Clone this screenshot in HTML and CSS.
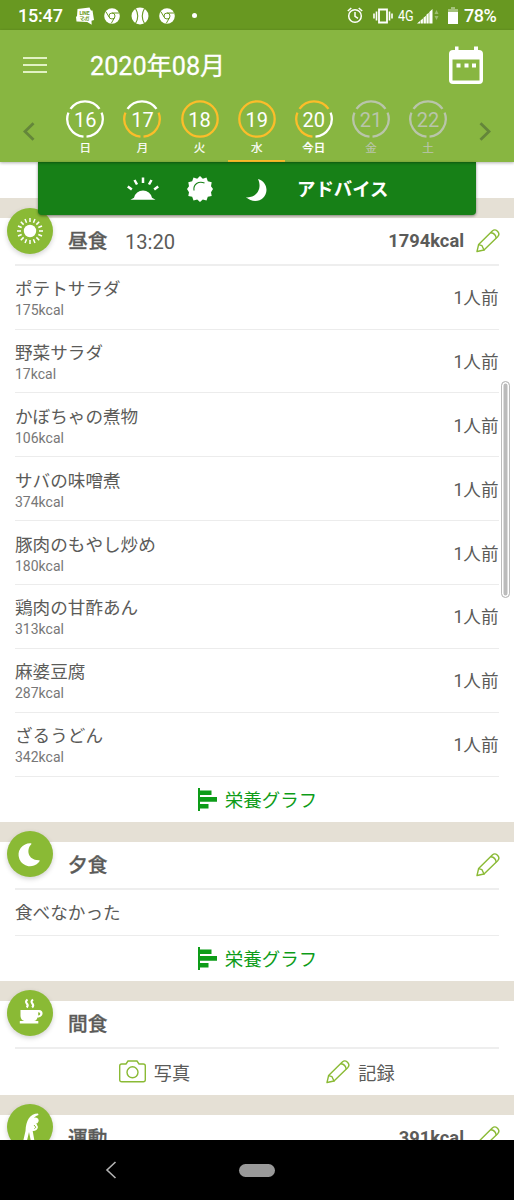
FILE: index.html
```html
<!DOCTYPE html>
<html lang="ja">
<head>
<meta charset="utf-8">
<title>食事記録</title>
<link rel="stylesheet" href="styles.css">
</head>
<body>
<svg class="defs" width="0" height="0">
  <symbol id="pencil" viewBox="0 0 24 24">
    <g fill="none" stroke="#8aba35" stroke-width="1.4" stroke-linejoin="round" stroke-linecap="round">
      <path d="M1 22.5 2.6 15.6 16.3 2a3.600 3.600 0 0 1 4.900 0l.7.7a3.600 3.600 0 0 1 0 4.700L8 21Z"/>
      <path d="M2.600 15.600l3.400 1.100L8 21M15 3.700c2.800.4 4.700 2.200 5.100 5"/>
    </g>
  </symbol>
  <symbol id="graph" viewBox="0 0 20 23">
    <path fill="#0d9c18" d="M0 0h2v2.500h11.500V7H2v2h17v4.700H2V16h8.500v4.500H2V23H0z"/>
  </symbol>
  <symbol id="chrome" viewBox="0 0 16 16">
    <circle cx="8" cy="8" r="7.8" fill="#fff"/>
    <g fill="none" stroke="#689821" stroke-width="1"><circle cx="8" cy="8" r="3"/><path d="M8 5h7M5.400 9.500 1.900 3.700M10.600 9.500 7.300 15.300"/></g>
  </symbol>
</svg>
<div class="phone">
  <div class="status">
    <span class="clock">15:47</span>
    <svg class="s-line" width="18" height="18" viewBox="0 0 18 18"><path fill="#fff" d="M1.500 2 13.500.5 15 3.500h1.500L18 13l-2.500.8.2 3.900-4.500-2.700L.5 14.500 0 10l1-1z"/><g fill="#689821" font-family="Roboto, sans-serif" font-size="5" font-weight="700"><text x="3.500" y="7.500" textLength="10">LINE</text><text x="3.500" y="12.500" textLength="10" font-family="Noto Sans CJK JP, sans-serif" font-size="4.500">マンガ</text></g></svg>
    <svg class="s-c1" width="16" height="16"><use href="#chrome"/></svg>
    <svg class="s-ball" width="18" height="18" viewBox="0 0 18 18"><circle cx="9" cy="9" r="8.500" fill="#fff"/><path d="M4.500 1.500q4.500 7.500 0 15M13.500 1.500q-4.500 7.500 0 15" fill="none" stroke="#689821" stroke-width="1.100"/></svg>
    <svg class="s-c2" width="16" height="16"><use href="#chrome"/></svg>
    <span class="dot"></span>
    <svg class="s-alarm" width="16" height="17" viewBox="0 0 16 17"><g fill="none" stroke="#fff" stroke-width="1.500"><circle cx="8" cy="9" r="6.300"/><path d="M8 5v4.300l3 2M.8 4 4.300 1M15.200 4 11.700 1"/></g></svg>
    <svg class="s-vib" width="20" height="16" viewBox="0 0 20 16"><path d="M6 1.500h8v13H6z" fill="none" stroke="#fff" stroke-width="1.800"/><path d="M3.500 3.500v9M1 5.500v5M16.500 3.500v9M19 5.500v5" stroke="#fff" stroke-width="1.600"/></svg>
    <span class="net">4G</span>
    <svg class="s-sig" width="22" height="16" viewBox="0 0 22 16"><path fill="#fff" d="M0 15.500 3 13v2.500zM3.500 12.500l2.400-2v5H3.500zM6.500 9.800l2.400-2v7.700H6.500zM9.400 6.800l2.300-2v10.700H9.400zM12.300 4 15.500 1v14.500h-3.200z"/><path fill="#9dbd70" d="m17.500 6 2-4 2 4zM17.500 8h4l-2 4z"/></svg>
    <svg class="s-bat" width="10" height="17" viewBox="0 0 10 17"><path fill="#a4c27a" d="M3 0h4v2h3v4H0V2h3z"/><path fill="#fff" d="M0 5h10v12H0z"/></svg>
    <span class="pct">78%</span>
  </div>

  <header class="top">
    <div class="bar">
      <svg class="menu" width="24" height="18" viewBox="0 0 24 18"><path d="M0 2h24M0 9h24M0 16h24" stroke="#e1f2c4" stroke-width="2.200"/></svg>
      <h1>2020年08月</h1>
      <svg class="cal" width="36" height="39" viewBox="0 0 36 39"><path fill="#fff" fill-rule="evenodd" d="M7 .5h3.500V4h15.500V.5h4V4h1a4 4 0 0 1 4 4v26a4 4 0 0 1-4 4H5a4 4 0 0 1-4-4V8a4 4 0 0 1 4-4h2zM4.500 13.500v21h27v-21zM8.500 17.500h4v4h-4zm8 0h4v4h-4zm7.500 0h4v4h-4z"/></svg>
    </div>
    <div class="week">
      <svg class="prev" width="12" height="19" viewBox="0 0 12 19"><path d="M10.500 1.200 2 9.500l8.500 8.300" fill="none" stroke="#64863a" stroke-width="2.800"/></svg>
      <div class="days">
        <div class="day"><div class="ring"><svg viewBox="0 0 40 40"><path class="w" d="M5.500 9.900A17.700 17.700 0 0 1 34.500 9.900"/><path class="w" d="M36.600 13.700A17.700 17.700 0 0 1 21.500 37.600"/><path class="w" d="M18.500 37.600A17.700 17.700 0 0 1 3.400 13.700"/></svg><b>16</b></div><i>日</i></div>
        <div class="day"><div class="ring"><svg viewBox="0 0 40 40"><path class="w" d="M5.500 9.900A17.700 17.700 0 0 1 34.500 9.900"/><path class="o" d="M36.600 13.700A17.700 17.700 0 0 1 21.500 37.600"/><path class="o" d="M18.500 37.600A17.700 17.700 0 0 1 3.400 13.700"/></svg><b>17</b></div><i>月</i></div>
        <div class="day"><div class="ring"><svg viewBox="0 0 40 40"><circle class="o" cx="20" cy="20" r="17.700"/></svg><b>18</b></div><i>火</i></div>
        <div class="day selected"><div class="ring"><svg viewBox="0 0 40 40"><circle class="o" cx="20" cy="20" r="17.700"/></svg><b>19</b></div><i>水</i></div>
        <div class="day today"><div class="ring"><svg viewBox="0 0 40 40"><path class="o" d="M5.500 9.900A17.700 17.700 0 0 1 34.500 9.900"/><path class="w" d="M36.600 13.700A17.700 17.700 0 0 1 21.500 37.600"/><path class="o" d="M18.500 37.600A17.700 17.700 0 0 1 3.400 13.700"/></svg><b>20</b></div><i>今日</i></div>
        <div class="day future"><div class="ring"><svg viewBox="0 0 40 40"><path class="g" d="M5.500 9.900A17.700 17.700 0 0 1 34.500 9.900"/><path class="g" d="M36.600 13.700A17.700 17.700 0 0 1 21.500 37.600"/><path class="g" d="M18.500 37.600A17.700 17.700 0 0 1 3.400 13.700"/></svg><b>21</b></div><i>金</i></div>
        <div class="day future"><div class="ring"><svg viewBox="0 0 40 40"><path class="g" d="M5.500 9.900A17.700 17.700 0 0 1 34.500 9.900"/><path class="g" d="M36.600 13.700A17.700 17.700 0 0 1 21.500 37.600"/><path class="g" d="M18.500 37.600A17.700 17.700 0 0 1 3.400 13.700"/></svg><b>22</b></div><i>土</i></div>
      </div>
      <svg class="next" width="12" height="19" viewBox="0 0 12 19"><path d="M1.500 1.200 10 9.500l-8.500 8.300" fill="none" stroke="#64863a" stroke-width="2.800"/></svg>
    </div>
    <div class="advice">
      <svg class="rise" width="34" height="24" viewBox="0 0 34 24"><path fill="#fff" d="M4.500 22.700 8 20.800a9.200 9.200 0 0 1 18 0l3.500 1.900z"/><path d="M17 .5v5.500M8.500 3l2.500 4.500M25.500 3 23 7.500M1.800 9.500l4 3M32.200 9.500l-4 3" stroke="#fff" stroke-width="2.500"/></svg>
      <svg class="noon" width="26" height="26" viewBox="0 0 26 26"><path fill="#fff" d="m13 0 2.800 2.800L19.500 1.600l1.300 3.700 3.900.9-.7 4L26 13l-2 3.200.7 3.700-3.900.9-1.300 3.600-3.700-1L13 26l-2.800-2.600-3.700 1-1.300-3.600-3.900-.9.700-3.700L0 13l2-2.800-.7-4 3.900-.9 1.300-3.700 3.700 1.200z"/><path d="M7 14.500C6 8.500 11.500 4.500 17.500 7" fill="none" stroke="#178017" stroke-width="1.100"/></svg>
      <svg class="night" width="22" height="24" viewBox="0 0 22 24"><path fill="#fff" d="M13 1c10 3 10.500 14 5 19C14 24 6 24 1 19.300c9 1.200 17-7.500 12-18.300z"/></svg>
      <span>アドバイス</span>
    </div>
  </header>

  <main class="content">
    <div class="previous"></div>
    <section>
      <div class="badge"><svg viewBox="0 0 46 46"><circle cx="23" cy="23" r="6.200" fill="#fff"/><g stroke="#fff" stroke-width="1.500"><path id="ray" d="M23 10v4M23 32v4M10 23h4M32 23h4"/><use href="#ray" transform="rotate(22.500 23 23)"/><use href="#ray" transform="rotate(45 23 23)"/><use href="#ray" transform="rotate(67.500 23 23)"/></g></svg></div>
      <div class="head"><h2>昼食</h2><span class="time">13:20</span><strong>1794kcal</strong><svg class="pencil"><use href="#pencil"/></svg></div>
      <ul>
        <li><div><p>ポテトサラダ</p><small>175kcal</small></div><span>1人前</span></li>
        <li><div><p>野菜サラダ</p><small>17kcal</small></div><span>1人前</span></li>
        <li><div><p>かぼちゃの煮物</p><small>106kcal</small></div><span>1人前</span></li>
        <li><div><p>サバの味噌煮</p><small>374kcal</small></div><span>1人前</span></li>
        <li><div><p>豚肉のもやし炒め</p><small>180kcal</small></div><span>1人前</span></li>
        <li><div><p>鶏肉の甘酢あん</p><small>313kcal</small></div><span>1人前</span></li>
        <li><div><p>麻婆豆腐</p><small>287kcal</small></div><span>1人前</span></li>
        <li><div><p>ざるうどん</p><small>342kcal</small></div><span>1人前</span></li>
      </ul>
      <div class="graph"><svg><use href="#graph"/></svg><span>栄養グラフ</span></div>
    </section>
    <section>
      <div class="badge"><svg viewBox="0 0 46 46"><path fill="#fff" d="M25 13.200C20 18 21 29 32.500 29.200 34 29 33.500 30 32.500 31.200A11.500 11.500 0 1 1 24.500 12.300q1 .2.500.9z" transform="translate(-.7 0)"/></svg></div>
      <div class="head"><h2>夕食</h2><svg class="pencil"><use href="#pencil"/></svg></div>
      <div class="none">食べなかった</div>
      <div class="graph"><svg><use href="#graph"/></svg><span>栄養グラフ</span></div>
    </section>
    <section>
      <div class="badge"><svg viewBox="0 0 46 46"><path fill="#fff" fill-rule="evenodd" d="M13.500 20H32c5-.2 5 7.500-1.500 7.500-.5 2-1.700 3.300-3.500 3.500h4.300v2.500H12.800V31h4.400c-2.400-.5-3.500-2.500-3.700-5zm17.700 2.200v3.200c2.600.2 2.800-3.400 0-3.200z"/><path d="M20.500 9.500q-2.500 2-.7 4t-.1 4M26 9.500q-2.500 2-.7 4t-.1 4" fill="none" stroke="#fff" stroke-width="2.100"/></svg></div>
      <div class="head"><h2>間食</h2></div>
      <div class="actions">
        <div><svg width="27" height="23" viewBox="0 0 27 23"><g fill="none" stroke="#8aba35" stroke-width="1.400"><path d="M2.700 4H7L9 1h9l2 3h4.300q2 0 2 2v13.800q0 2-2 2H2.700q-2 0-2-2V6q0-2 2-2z"/><circle cx="13.500" cy="12.300" r="5.500"/></g></svg><span>写真</span></div>
        <div><svg class="pencil"><use href="#pencil"/></svg><span>記録</span></div>
      </div>
    </section>
    <section>
      <div class="badge"><svg viewBox="0 0 46 46"><path fill="#fff" d="M31 9.500C23 9.500 19 16 18.500 27L15.500 40h3.700L22 28l2.500 12H28l-2.300-13c2.800.2 4.800-1.300 5.300-4l-1.400-3-2-.5a3 3 0 1 0-1.800-4c1.300-2.300 3-3.800 5.700-4.500z"/><path d="m27 21 1.800 2.200-1.300 1.500" fill="none" stroke="#8aba35" stroke-width="1"/></svg></div>
      <div class="head"><h2>運動</h2><strong>391kcal</strong><svg class="pencil"><use href="#pencil"/></svg></div>
    </section>
    <div class="scroll"></div>
  </main>
  <nav>
    <svg width="12" height="18" viewBox="0 0 12 18"><path d="M10.500 1 2 9l8.500 8" fill="none" stroke="#b3b3b3" stroke-width="1.600"/></svg>
    <span class="home"></span>
  </nav>
</div>
</body>
</html>
```
FILE: styles.css
```css
* { box-sizing: border-box; margin: 0; padding: 0; }
body { background: #fff; color: #5b5b59; font-family: Roboto, "Noto Sans CJK JP", sans-serif; }
svg { display: block; flex: none; }
.defs { position: absolute; }
.phone { width: 514px; height: 1200px; display: flex; flex-direction: column; overflow: hidden; }

.status { flex: none; height: 30px; background: #689821; color: #fff; display: flex; align-items: center; padding: 1px 0 0 18px; white-space: nowrap; }
.clock { width: 58px; font-size: 18px; font-weight: 500; letter-spacing: -.2px; }
.s-c1 { margin-left: 10px; }
.s-ball { margin-left: 11px; }
.s-c2 { margin-left: 10px; }
.dot { width: 5px; height: 5px; border-radius: 50%; background: #fff; margin-left: 17px; }
.s-alarm { margin-left: 150px; }
.s-vib { margin-left: 10px; }
.net { font-size: 15px; margin-left: 5px; width: 17px; transform: scaleX(.84); transform-origin: left; }
.s-sig { margin-left: 2px; }
.s-bat { margin-left: 9px; }
.pct { font-size: 18px; font-weight: 500; margin-left: 6px; letter-spacing: -.5px; }

.top { flex: none; position: relative; z-index: 2; height: 132px; background: #88b641; color: #fff; box-shadow: 0 1px 3px rgba(0,0,0,.3); }
.bar { height: 69px; display: flex; align-items: center; padding: 0 30px 0 23px; }
h1 { font-size: 25.200px; line-height: 36px; font-weight: 400; margin-left: 43px; padding-top: 4px; -webkit-text-stroke: .3px #fff; }
.cal { margin-left: auto; margin-top: 1px; }
.week { height: 63px; display: flex; padding: 0 23px; }
.prev, .next { margin-top: 23px; }
.days { flex: none; width: 400px; margin: 0 22px 0 21.700px; display: grid; grid-template-columns: repeat(7, 1fr); }
.next { margin-left: .3px; }
.day { display: flex; flex-direction: column; align-items: center; height: 63px; border-bottom: 2px solid transparent; }
.selected { border-color: #fcbd2a; }
.ring { width: 40px; height: 40px; display: grid; place-items: center; }
.ring > * { grid-area: 1 / 1; }
.ring svg { width: 40px; height: 40px; fill: none; stroke-width: 2.3; }
.w { stroke: #fff; }
.o { stroke: #fcbd2a; }
.g { stroke: #b9c5aa; }
.day b { font-size: 20px; font-weight: 400; line-height: 24px; padding-top: 1px; }
.day i { font-style: normal; font-size: 11.500px; line-height: 18px; font-weight: 400; -webkit-text-stroke: .2px; }
.future { color: #b9c5aa; }
.day.today i { font-weight: 500; }
.advice { position: absolute; left: 38px; top: 132px; width: 438px; height: 53px; background: #178017; border-radius: 0 0 4px 4px; display: flex; align-items: center; padding-left: 88px; box-shadow: 0 1px 3px rgba(0,0,0,.45), inset 0 3px 3px -2px rgba(0,0,0,.35); }
.noon { margin-left: 27px; }
.night { margin-left: 32px; margin-top: 2px; }
.advice span { font-size: 18.400px; font-weight: 700; margin: -1px 0 0 30px; }

.content { position: relative; flex: 1; min-height: 0; overflow: hidden; }
.previous { height: 36px; }
section { position: relative; border-top: 20px solid #e5e0d5; }
.badge { position: absolute; left: 7px; top: -10.500px; width: 46px; height: 46px; border-radius: 50%; background: #8aba35; box-shadow: 0 2px 5px rgba(0,0,0,.18); }
.head { height: 47.800px; margin: 0 15px; padding-left: 53px; border-bottom: 2px solid #eee; display: flex; align-items: center; }
h2 { font-size: 19.700px; line-height: 28px; font-weight: 500; -webkit-text-stroke: .3px #5b5b59; padding-top: 3px; }
.time { font-size: 20.200px; margin-left: 17.500px; padding-top: 2px; }
.head strong { margin-left: auto; font-size: 18.300px; font-weight: 700; }
.pencil { width: 24px; height: 24px; }
.head .pencil { margin: 0 -1px 0 12px; }
.head h2 + .pencil { margin-left: auto; }
ul { list-style: none; padding: 0 15px; }
li { height: 63.850px; border-bottom: 1px solid #ececec; display: flex; align-items: center; justify-content: space-between; }
li p { font-size: 17.600px; line-height: 25px; padding-top: 2px; }
li small { display: block; font-size: 14px; line-height: 17px; color: #777; }
li > span { font-size: 17.600px; padding: 0 .5px 1px 0; }
.graph { height: 45.400px; display: flex; align-items: center; justify-content: center; color: #0d9c18; font-size: 18.500px; padding-left: 1px; }
.graph svg { width: 20px; height: 23px; margin-right: 7px; }
.none { height: 45.800px; line-height: 47px; margin: 0 15px; border-bottom: 1px solid #ececec; font-size: 17.600px; }
.actions { height: 46px; display: grid; grid-template-columns: 1fr 1fr; padding: 0 51px; }
.actions div { display: flex; align-items: center; justify-content: center; font-size: 18.200px; padding-left: 1px; }
.actions span { margin-left: 8px; }
.scroll { position: absolute; left: 501px; top: 219px; width: 9px; height: 217px; border: 1px solid #bbb; border-radius: 5px; background: #bbb; box-shadow: inset 0 0 0 1.500px #fff; }

nav { flex: none; height: 60px; background: #000; display: flex; align-items: center; padding-left: 105px; }
.home { width: 36px; height: 13px; border-radius: 7px; background: #999; margin-left: 122px; }
```
